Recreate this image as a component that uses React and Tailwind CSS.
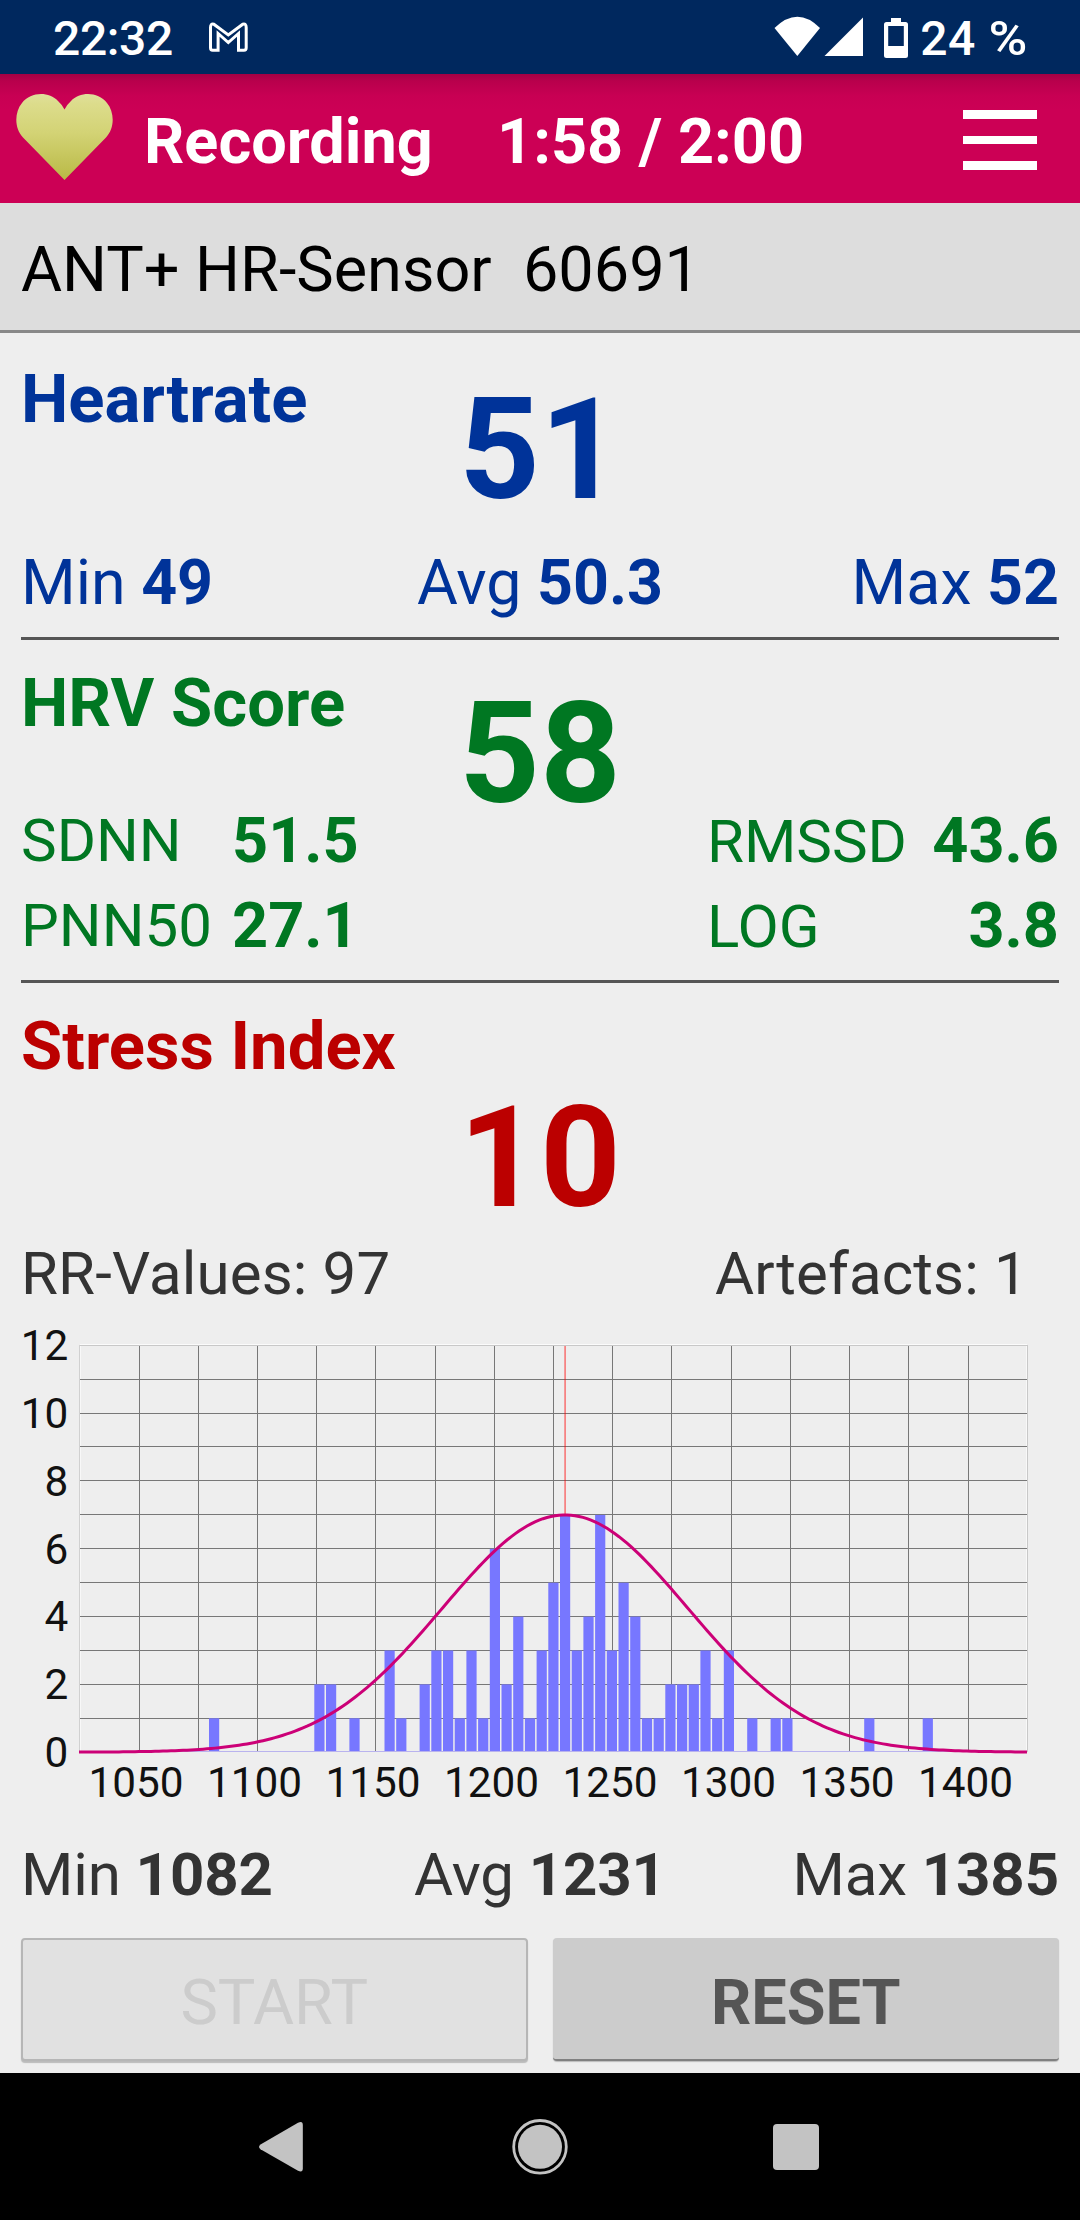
/**
 * HRV recording screen — live heart rate, HRV score, stress index and
 * the RR interval histogram.
 */

const SUMMARY = {
  heartrate: { value: '51', min: '49', avg: '50.3', max: '52' },
  hrv: { value: '58', sdnn: '51.5', pnn50: '27.1', rmssd: '43.6', log: '3.8' },
  stress: { value: '10', rrValues: 97, artefacts: 1 },
  rr: { min: '1082', avg: '1231', max: '1385' },
}

// Histogram counts, keyed by the number of 5 ms bins away from the mean
const BINS = [
  [-30, 1], [-21, 2], [-20, 2], [-18, 1], [-15, 3], [-14, 1], [-12, 2], [-11, 3],
  [-10, 3], [-9, 1], [-8, 3], [-7, 1], [-6, 6], [-5, 2], [-4, 4], [-3, 1],
  [-2, 3], [-1, 5], [0, 7], [1, 3], [2, 4], [3, 7], [4, 3], [5, 5],
  [6, 4], [7, 1], [8, 1], [9, 2], [10, 2], [11, 2], [12, 3], [13, 1],
  [14, 3], [16, 1], [18, 1], [19, 1], [26, 1], [31, 1],
]

// Chart geometry
const LEFT = 80
const RIGHT = 1027
const TOP = 36
const BASE = 443.2
const UNIT = 33.9
const MEAN_X = 565.1
const BIN_STEP = 11.7
const SIGMA = 122.8

function gaussPath() {
  const points = []
  for (let x = LEFT - 1; x <= RIGHT + 1; x += 4) {
    const y = BASE - 7 * UNIT * Math.exp(-((x - MEAN_X) ** 2) / (2 * SIGMA ** 2))
    points.push(`${x} ${y.toFixed(2)}`)
  }
  return `M${points.join('L')}`
}

function StatusBar() {
  return (
    <div className="h-[74px] bg-[#00285e] flex items-center justify-between pl-[53px] pr-[52px] text-white text-[48px] leading-none font-medium">
      <div className="flex items-center">
        <span className="pt-[4px] tracking-[-0.4px]">22:32</span>
        <svg className="ml-[36px]" width="39" height="30" viewBox="0 0 39 30" fill="none" stroke="white" strokeWidth="3">
          <path d="M1.5 5.5Q1.5 1.2 4.8 2.2L19.3 13L33.8 2.2Q37.2 1.2 37.2 5.5V25.7Q37.2 28.2 35 28.2H29.5V11.5L19.3 20.5L9.1 11.5V28.2H3.6Q1.5 28.2 1.5 25.7Z" />
        </svg>
      </div>
      <div className="flex items-center">
        <svg width="136" height="42" viewBox="0 0 136 42" fill="white">
          <path d="M0.5 12Q23.5 -10.5 46 12L23.3 40Z" />
          <path d="M50.5 40L89 1.5V40Z" />
          <path fillRule="evenodd" d="M117 2H127V6H131.5Q134 6 134 8.5V39.5Q134 42 131.5 42H112.5Q110 42 110 39.5V8.5Q110 6 112.5 6H117ZM114.2 10V30H129.8V10Z" />
        </svg>
        <span className="ml-[10px] pt-[4px] tracking-[0.5px] [word-spacing:4px]">
          24 <span className="inline-block origin-right scale-x-110">%</span>
        </span>
      </div>
    </div>
  )
}

function Header() {
  return (
    <div className="h-[129px] bg-[linear-gradient(to_bottom,#a30043_0px,#b8004c_7px,#c80053_22px,#cc0055_36px)] flex items-center pl-[16px] pr-[43px] text-white text-[63px] leading-none font-bold">
      <svg className="mb-[3px]" width="97" height="86" viewBox="0 0 97 86">
        <defs>
          <linearGradient id="heart" x1="0" y1="0" x2="0" y2="1">
            <stop offset="0" stopColor="#dfdf9a" />
            <stop offset="0.12" stopColor="#dcdc8b" />
            <stop offset="0.45" stopColor="#d3d375" />
            <stop offset="1" stopColor="#b9b945" />
          </linearGradient>
        </defs>
        <path fill="url(#heart)" d="M48.5 86L7 43.5C-2 34 -1.5 18 6 9C15 -2.5 33 -2.5 42 7Q46 10.5 48.5 15.5Q51 10.5 55 7C64 -2.5 82 -2.5 91 9C98.5 18 99 34 90 43.5Z" />
      </svg>
      <div className="flex-1 flex pt-[6px] pl-[31px]">
        <span className="w-[353px]">Recording</span>
        <span>1:58 / 2:00</span>
      </div>
      <div className="flex flex-col gap-[17px] pt-[3px]">
        <div className="w-[74px] h-[8.5px] bg-white" />
        <div className="w-[74px] h-[8.5px] bg-white" />
        <div className="w-[74px] h-[8.5px] bg-white" />
      </div>
    </div>
  )
}

function SectionHead({ title, value, titleClass, valueClass }) {
  return (
    <>
      <h2 className={`text-[67px] leading-[78px] font-bold whitespace-nowrap w-0 ${titleClass}`}>{title}</h2>
      <span className={`text-[141px] leading-[141px] font-bold ${valueClass}`}>{value}</span>
    </>
  )
}

function MinAvgMax({ data, className }) {
  return (
    <div className={`grid grid-cols-[1fr_auto_1fr] whitespace-pre ${className}`}>
      <span>Min <b>{data.min}</b></span>
      <span>Avg <b>{data.avg}</b></span>
      <span className="text-right">Max <b>{data.max}</b></span>
    </div>
  )
}

function Metric({ label, value, className = '' }) {
  return (
    <div className={`flex items-baseline h-[85px] leading-[85px] ${className}`}>
      {label && <span className="text-[60px]">{label}</span>}
      {value && <b className="text-[63px]">{value}</b>}
    </div>
  )
}

function Histogram() {
  const verticals = [139, 198, 257, 316, 375, 435, 494, 553, 612, 671, 731, 790, 849, 908, 968]
  const horizontals = [70, 104, 137, 171, 205, 239, 273, 307, 341, 375, 409]

  return (
    <svg className="block -ml-[21px]" width="1080" height="530" viewBox="0 0 1080 530">
      {/* Frame */}
      <g shapeRendering="crispEdges">
        <rect x={LEFT} y="35" width="947" height="1" fill="#fbfbfb" />
        <rect x={LEFT} y={TOP} width="947" height="1" fill="#c8c8c8" />
        <rect x="79" y={TOP} width="1" height="407" fill="#d0d0d0" />
        <rect x="80" y={TOP + 1} width="1" height="406" fill="#f8f8f8" />
        <rect x="1026" y={TOP + 1} width="1" height="406" fill="#f8f8f8" />
        <rect x="1027" y={TOP} width="1" height="407" fill="#c8c8c8" />
      </g>

      {/* Grid */}
      <g fill="#777777" shapeRendering="crispEdges">
        {verticals.map(x => <rect key={x} x={x} y={TOP + 1} width="1" height="406" />)}
        {horizontals.map(y => <rect key={y} x={LEFT} y={y} width="947" height="1" />)}
      </g>
      <rect x={LEFT} y="442" width="947" height="1" fill="#b9b3ee" />

      <rect x="564.3" y={TOP + 1} width="1.6" height="170" fill="#ff0000" fillOpacity="0.5" />

      {/* Bars */}
      {BINS.map(([bin, count]) => {
        const x = MEAN_X + bin * BIN_STEP - 5.1
        return (
          <rect key={bin} x={x} y={BASE - count * UNIT} width="10.2" height={count * UNIT - 1.2} fill="#7777ff" />
        )
      })}

      <path d={gaussPath()} fill="none" stroke="#cc0077" strokeWidth="3" />

      {/* Axis labels */}
      <g className="text-[42.3px]" fill="#111111">
        {[12, 10, 8, 6, 4, 2, 0].map((n, i) => (
          <text key={n} x="68.3" y={51 + i * 67.85} textAnchor="end">{n}</text>
        ))}
        {[1050, 1100, 1150, 1200, 1250, 1300, 1350, 1400].map((n, i) => (
          <text key={n} x={136 + i * 118.5} y="488" textAnchor="middle">{n}</text>
        ))}
      </g>
    </svg>
  )
}

function NavBar() {
  return (
    <div className="h-[147px] bg-black flex justify-center">
      <svg width="562" height="147" viewBox="0 0 562 147" fill="#c3c3c3">
        <path d="M1.5 71.5L39 49.8Q43.8 47.5 43.8 52V95.5Q43.8 100 39 97.8L1.5 76.2Q-1.5 73.8 1.5 71.5Z" />
        <circle cx="281" cy="73.8" r="26.3" fill="none" stroke="#c3c3c3" strokeWidth="2.8" />
        <circle cx="281" cy="73.8" r="22" />
        <rect x="514" y="51" width="46" height="46" rx="4" />
      </svg>
    </div>
  )
}

export default function App() {
  const { heartrate, hrv, stress, rr } = SUMMARY

  return (
    <div className="w-[1080px] h-[2220px] flex flex-col overflow-hidden bg-[#eeeeee] font-[Roboto,sans-serif]">
      <StatusBar />
      <Header />

      <div className="h-[130px] bg-[#dddddd] border-b-[3px] border-[#888888] flex items-center pt-[6px] pl-[21px] text-[63px] leading-none text-black whitespace-pre">
        {'ANT+ HR-Sensor  60691'}
      </div>

      <main className="h-[1740px] px-[21px]">
        {/* Heartrate */}
        <section className="h-[307px] border-b-[3px] border-[#555555] text-[#003399]">
          <div className="h-[214px] grid grid-cols-[1fr_auto_1fr] items-start">
            <SectionHead title="Heartrate" value={heartrate.value} titleClass="mt-[27px]" valueClass="mt-[46px]" />
          </div>
          <MinAvgMax data={heartrate} className="text-[62.7px] leading-[72px]" />
        </section>

        {/* HRV */}
        <section className="h-[343px] border-b-[3px] border-[#555555] text-[#007722]">
          <div className="h-[158px] grid grid-cols-[1fr_auto_1fr] items-start">
            <SectionHead title="HRV Score" value={hrv.value} titleClass="mt-[24px]" valueClass="mt-[43px]" />
          </div>
          <div className="flex justify-between">
            <div className="grid grid-cols-[211px_auto]">
              <div>
                <Metric label="SDNN" />
                <Metric label="PNN50" />
              </div>
              <div>
                <Metric value={hrv.sdnn} />
                <Metric value={hrv.pnn50} />
              </div>
            </div>
            <div className="w-[352px]">
              <Metric label="RMSSD" value={hrv.rmssd} className="justify-between" />
              <Metric label="LOG" value={hrv.log} className="justify-between" />
            </div>
          </div>
        </section>

        {/* Stress index */}
        <section>
          <div className="h-[255px] grid grid-cols-[1fr_auto_1fr] items-start text-[#bb0000]">
            <SectionHead title="Stress Index" value={stress.value} titleClass="mt-[24px]" valueClass="mt-[104px]" />
          </div>
          <div className="h-[71px] flex text-[60px] leading-[71px] tracking-[0.15px] text-[#333333]">
            <span className="w-[694px]">RR-Values: {stress.rrValues}</span>
            <span>Artefacts: {stress.artefacts}</span>
          </div>
          <Histogram />
          <MinAvgMax data={rr} className="text-[60px] leading-[71px] tracking-[-0.1px] text-[#333333]" />
        </section>

        <div className="mt-[28px] grid grid-cols-2 gap-[25px] text-[63px]">
          <button disabled className="h-[123px] pt-[8px] rounded-[4px] border-2 border-[#b6b6b6] bg-[#e1e1e1] text-[#cccccc] shadow-[0_2px_1px_#bbbbbb]">
            START
          </button>
          <button className="h-[123px] pt-[10px] rounded-[4px] border-b-2 border-[#808080] bg-[#cccccc] text-[#555555] font-bold shadow-[0_1px_1px_#bbbbbb]">
            RESET
          </button>
        </div>
      </main>

      <NavBar />
    </div>
  )
}
